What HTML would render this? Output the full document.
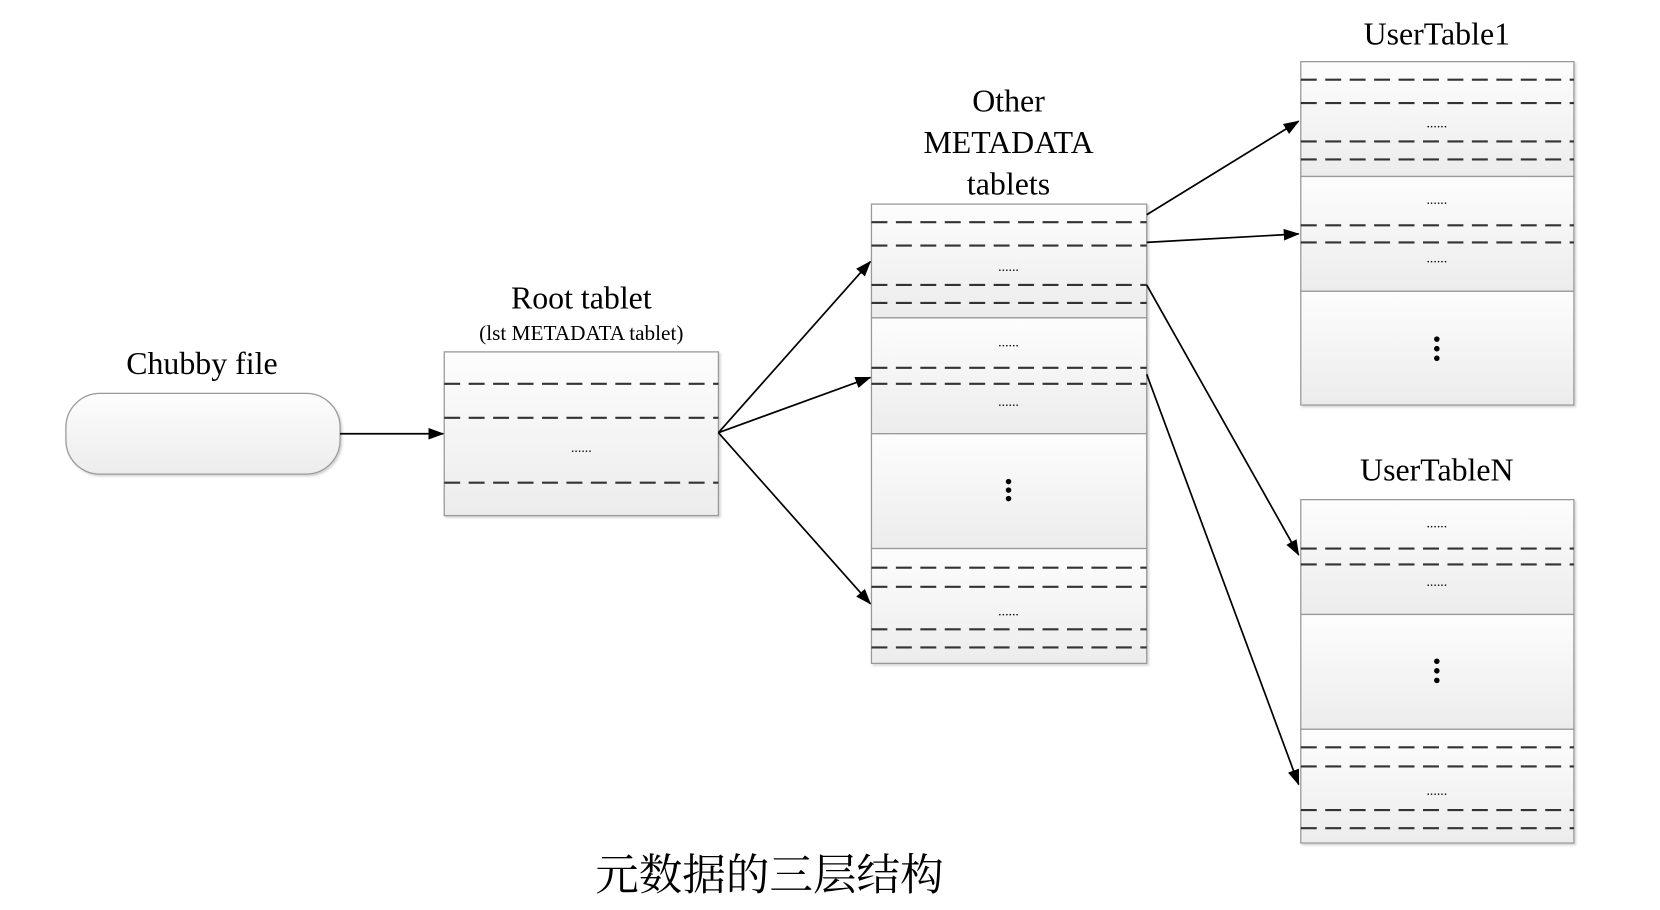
<!DOCTYPE html>
<html><head><meta charset="utf-8"><style>
html,body{margin:0;padding:0;background:#fff;width:1660px;height:910px;overflow:hidden}
svg{display:block}
text{font-family:"Liberation Serif","Noto Serif CJK SC",serif;fill:#000}
</style></head><body>
<svg width="1660" height="910" viewBox="0 0 1562 856" preserveAspectRatio="none" xmlns="http://www.w3.org/2000/svg">
<defs>
<linearGradient id="g" x1="0" y1="0" x2="0" y2="1"><stop offset="0" stop-color="#fdfdfd"/><stop offset="1" stop-color="#ececec"/></linearGradient>
<marker id="a" markerWidth="15" markerHeight="11" refX="14" refY="5.5" orient="auto" markerUnits="userSpaceOnUse"><path d="M0,0 L15,5.5 L0,11 Z" fill="#000"/></marker>
<filter id="s" x="-5%" y="-5%" width="110%" height="110%"><feDropShadow dx="1.5" dy="1.5" stdDeviation="1" flood-color="#000" flood-opacity="0.18"/></filter>
</defs>
<g transform="translate(-3,0)">
<g stroke="#999" stroke-width="1.2" fill="url(#g)" filter="url(#s)">
<rect x="65" y="370" width="258" height="76" rx="32"/>
<rect x="421" y="331" width="258" height="154"/>
<rect x="823" y="192" width="259" height="107"/><rect x="823" y="299" width="259" height="109"/><rect x="823" y="408" width="259" height="108"/><rect x="823" y="516" width="259" height="108"/>
<rect x="1227" y="58" width="257" height="108"/><rect x="1227" y="166" width="257" height="108"/><rect x="1227" y="274" width="257" height="107"/>
<rect x="1227" y="470" width="257" height="108"/><rect x="1227" y="578" width="257" height="108"/><rect x="1227" y="686" width="257" height="107"/>
</g>
<g stroke="#333" stroke-width="2" stroke-dasharray="15 8">
<line x1="421" y1="361" x2="679" y2="361"/><line x1="421" y1="393" x2="679" y2="393"/><line x1="421" y1="454" x2="679" y2="454"/>
<line x1="823" y1="209" x2="1082" y2="209"/><line x1="823" y1="231" x2="1082" y2="231"/><line x1="823" y1="268" x2="1082" y2="268"/><line x1="823" y1="285" x2="1082" y2="285"/>
<line x1="823" y1="346" x2="1082" y2="346"/><line x1="823" y1="361" x2="1082" y2="361"/>
<line x1="823" y1="534" x2="1082" y2="534"/><line x1="823" y1="552" x2="1082" y2="552"/><line x1="823" y1="592" x2="1082" y2="592"/><line x1="823" y1="609" x2="1082" y2="609"/>
<line x1="1227" y1="75" x2="1484" y2="75"/><line x1="1227" y1="97" x2="1484" y2="97"/><line x1="1227" y1="133" x2="1484" y2="133"/><line x1="1227" y1="150" x2="1484" y2="150"/>
<line x1="1227" y1="212" x2="1484" y2="212"/><line x1="1227" y1="228" x2="1484" y2="228"/>
<line x1="1227" y1="516" x2="1484" y2="516"/><line x1="1227" y1="531" x2="1484" y2="531"/>
<line x1="1227" y1="703" x2="1484" y2="703"/><line x1="1227" y1="721" x2="1484" y2="721"/><line x1="1227" y1="762" x2="1484" y2="762"/><line x1="1227" y1="779" x2="1484" y2="779"/>
</g>
<g font-size="13" text-anchor="middle">
<text x="550" y="425">......</text>
<text x="952" y="255">......</text><text x="952" y="326">......</text><text x="952" y="382">......</text><text x="952" y="579">......</text>
<text x="1355" y="120">......</text><text x="1355" y="192">......</text><text x="1355" y="247">......</text>
<text x="1355" y="496">......</text><text x="1355" y="551">......</text><text x="1355" y="748">......</text>
</g>
<g fill="#000">
<circle cx="952" cy="453" r="2.6"/><circle cx="952" cy="461" r="2.6"/><circle cx="952" cy="469" r="2.6"/>
<circle cx="1355" cy="319" r="2.6"/><circle cx="1355" cy="328" r="2.6"/><circle cx="1355" cy="337" r="2.6"/>
<circle cx="1355" cy="622" r="2.6"/><circle cx="1355" cy="631" r="2.6"/><circle cx="1355" cy="640" r="2.6"/>
</g>
<g stroke="#000" stroke-width="1.6" marker-end="url(#a)">
<line x1="323" y1="408" x2="420" y2="408"/>
<line x1="679" y1="407" x2="822" y2="246"/>
<line x1="679" y1="407" x2="822" y2="355"/>
<line x1="679" y1="407" x2="822" y2="568"/>
<line x1="1082" y1="202" x2="1225" y2="114"/>
<line x1="1082" y1="228" x2="1225" y2="220"/>
<line x1="1082" y1="268" x2="1225" y2="522"/>
<line x1="1082" y1="352" x2="1225" y2="738"/>
</g>
<g text-anchor="middle" font-size="30">
<text x="193" y="352">Chubby file</text>
<text x="550" y="290">Root tablet</text>
<text x="550" y="320" font-size="20">(lst METADATA tablet)</text>
<text x="952" y="105">Other</text>
<text x="952" y="144">METADATA</text>
<text x="952" y="183">tablets</text>
<text x="1355" y="42">UserTable1</text>
<text x="1355" y="452">UserTableN</text>
<text x="727" y="837" font-size="41">元数据的三层结构</text>
</g>
</g>
</svg>
</body></html>
